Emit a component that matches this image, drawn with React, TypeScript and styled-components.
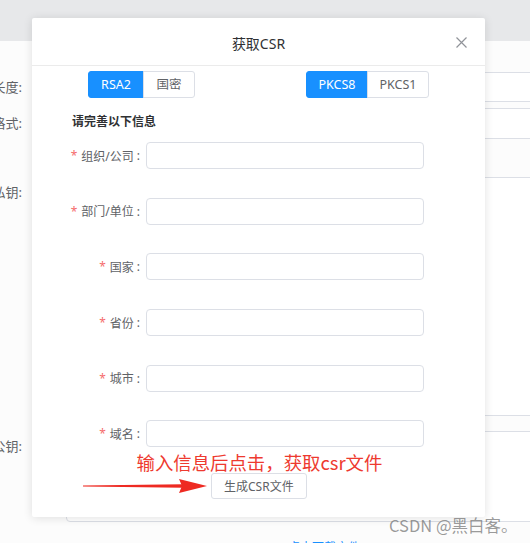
import React from 'react';
import styled, { createGlobalStyle } from 'styled-components';

const GlobalStyle = createGlobalStyle`
  html, body {
    margin: 0;
    padding: 0;
    background: #fbfbfb;
  }
  * {
    box-sizing: border-box;
  }
  body {
    font-family: "Noto Sans", "Noto Sans CJK SC", sans-serif;
  }
`;

const Stage = styled.div`
  position: relative;
  width: 530px;
  height: 543px;
  overflow: hidden;
  background: #fcfcfc;
`;

/* page behind the dialog */
const TopBand = styled.div`
  height: 41px;
  background: #e7e8ea;
`;

const PageForm = styled.div`
  display: flex;
  flex-direction: column;
  padding-top: 31px;
`;

const PageRow = styled.div<{ $height: number; $gap: number }>`
  display: grid;
  grid-template-columns: 22px 520px;
  column-gap: 44px;
  height: ${(p) => p.$height}px;
  margin-top: ${(p) => p.$gap}px;
`;

const PageLabel = styled.div`
  display: flex;
  justify-content: flex-end;
  white-space: nowrap;
  line-height: 30px;
  font-size: 13px;
  color: #606266;
`;

const PageField = styled.div`
  border: 1px solid #dcdfe6;
  border-radius: 4px;
  background: #fff;
`;

const PageLink = styled.div`
  margin-top: 18px;
  padding-left: 288px;
  font-size: 12px;
  line-height: 16px;
  color: #1890ff;
`;

/* dialog */
const Dialog = styled.div`
  position: absolute;
  left: 32px;
  top: 18px;
  width: 453px;
  height: 499px;
  background: #fff;
  border-radius: 2px;
  box-shadow: 0 1px 10px rgba(0, 0, 0, 0.12);
  display: flex;
  flex-direction: column;
`;

const Header = styled.div`
  display: grid;
  grid-template-columns: 1fr auto 1fr;
  align-items: center;
  height: 48px;
  padding-top: 2px;
  border-bottom: 1px solid #ebebeb;
`;

const Title = styled.div`
  grid-column: 2;
  font-size: 14px;
  color: #303133;
`;

const Close = styled.button`
  justify-self: end;
  margin-right: 18px;
  padding: 0;
  border: 0;
  background: none;
  display: flex;
`;

const ToggleRow = styled.div`
  display: flex;
  justify-content: space-between;
  margin-top: 5px;
  padding: 0 56px;
`;

const SegGroup = styled.div`
  display: flex;
`;

const Seg = styled.div<{ $active?: boolean; $width: number }>`
  width: ${(p) => p.$width}px;
  height: 27px;
  line-height: 25px;
  text-align: center;
  font-size: 12.5px;
  border: 1px solid ${(p) => (p.$active ? '#1890ff' : '#dcdfe6')};
  background: ${(p) => (p.$active ? '#1890ff' : '#fff')};
  color: ${(p) => (p.$active ? '#fff' : '#606266')};

  &:first-child {
    border-radius: 3px 0 0 3px;
  }
  &:last-child {
    border-radius: 0 3px 3px 0;
    margin-left: -1px;
  }
`;

const SectionTitle = styled.div`
  margin: 14px 0 0 40px;
  font-size: 12px;
  font-weight: bold;
  line-height: 20px;
  color: #303133;
`;

const Form = styled.div`
  display: flex;
  flex-direction: column;
  gap: 28.7px;
  margin-top: 10px;
`;

const FormRow = styled.div`
  display: grid;
  grid-template-columns: 108px 278px;
  column-gap: 6px;
  align-items: center;
  height: 27px;
`;

const Label = styled.label`
  display: flex;
  justify-content: flex-end;
  align-items: center;
  font-size: 12px;
  color: #606266;
  white-space: nowrap;
`;

const Star = styled.span`
  color: #f56c6c;
  margin-right: 4px;
`;

const Colon = styled.span`
  margin-left: 3px;
`;

const TextInput = styled.input`
  height: 27px;
  width: 100%;
  border: 1px solid #dcdfe6;
  border-radius: 4px;
  background: #fff;
  outline: none;
`;

const Hint = styled.div`
  margin: 3.5px 0 0 104.5px;
  font-family: "Noto Sans CJK SC", sans-serif;
  font-size: 18.4px;
  line-height: 22px;
  color: #ee3a2f;
`;

const ActionRow = styled.div`
  display: flex;
  align-items: center;
  gap: 4px;
  height: 26px;
  padding-left: 51px;
`;

const GenerateButton = styled.button`
  height: 26px;
  padding: 0 12px;
  border: 1px solid #dcdfe6;
  border-radius: 3px;
  background: #fff;
  color: #606266;
  font-family: "Noto Sans", "Noto Sans CJK SC", sans-serif;
  font-size: 12px;
`;

const Watermark = styled.div`
  position: absolute;
  left: 389px;
  top: 513px;
  font-family: "Noto Sans CJK SC", sans-serif;
  font-size: 16.5px;
  color: rgba(110, 110, 110, 0.7);
  white-space: nowrap;
`;

const fields = ['组织/公司', '部门/单位', '国家', '省份', '城市', '域名'];

const App = () => {
  return (
    <Stage>
      <GlobalStyle />
      <TopBand />
      <PageForm>
        <PageRow $height={30} $gap={0}>
          <PageLabel>长度:</PageLabel>
          <PageField />
        </PageRow>
        <PageRow $height={31} $gap={6}>
          <PageLabel>格式:</PageLabel>
          <PageField />
        </PageRow>
        <PageRow $height={239} $gap={38}>
          <PageLabel>私钥:</PageLabel>
          <PageField />
        </PageRow>
        <PageRow $height={91} $gap={15}>
          <PageLabel>公钥:</PageLabel>
          <PageField />
        </PageRow>
        <PageLink>点击下载文件</PageLink>
      </PageForm>

      <Dialog>
        <Header>
          <Title>获取CSR</Title>
          <Close aria-label="close">
            <svg width="11" height="11" viewBox="0 0 11 11">
              <path d="M0.5 0.5 L10.5 10.5 M10.5 0.5 L0.5 10.5" stroke="#909399" strokeWidth="1.2" fill="none" />
            </svg>
          </Close>
        </Header>

        <ToggleRow>
          <SegGroup>
            <Seg $active $width={56}>RSA2</Seg>
            <Seg $width={52}>国密</Seg>
          </SegGroup>
          <SegGroup>
            <Seg $active $width={62}>PKCS8</Seg>
            <Seg $width={62}>PKCS1</Seg>
          </SegGroup>
        </ToggleRow>

        <SectionTitle>请完善以下信息</SectionTitle>

        <Form>
          {fields.map((f) => (
            <FormRow key={f}>
              <Label>
                <Star>*</Star>
                {f}
                <Colon>:</Colon>
              </Label>
              <TextInput />
            </FormRow>
          ))}
        </Form>

        <Hint>输入信息后点击，获取csr文件</Hint>

        <ActionRow>
          <svg width="124" height="16" viewBox="0 0 124 16">
            <path d="M0 7.6 L100 6.2 L100 9.8 L0 8.4 Z" fill="#ee2a22" />
            <path d="M96 1 L124 8 L96 15 L99 8 Z" fill="#ee2a22" />
          </svg>
          <GenerateButton>生成CSR文件</GenerateButton>
        </ActionRow>
      </Dialog>

      <Watermark>CSDN @黑白客。</Watermark>
    </Stage>
  );
};

export default App;
